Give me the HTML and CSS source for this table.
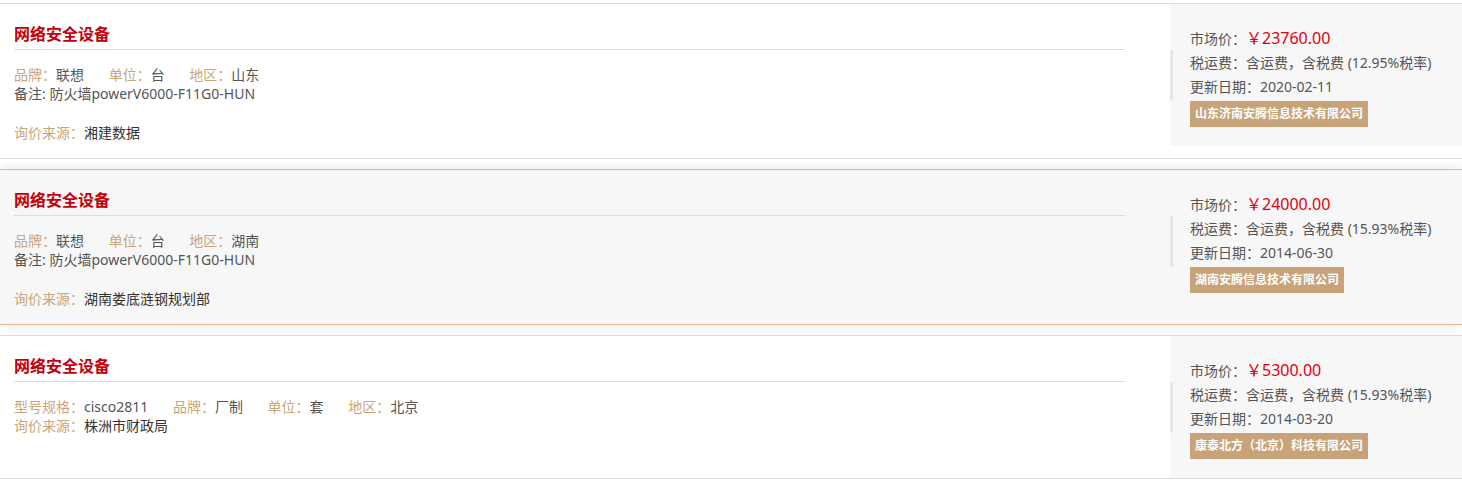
FILE: index.html
```html
<!DOCTYPE html>
<html lang="zh-CN">
<head>
<meta charset="utf-8">
<title>询价列表</title>
<link rel="stylesheet" href="styles.css">
</head>
<body>
<div class="list">
  <div class="card">
    <div class="main">
      <h3 class="title">网络安全设备</h3>
      <div class="row">
        <span class="item"><span class="lbl">品牌：</span>联想</span>
        <span class="item"><span class="lbl">单位：</span>台</span>
        <span class="item"><span class="lbl">地区：</span>山东</span>
      </div>
      <div class="row">备注: 防火墙powerV6000-F11G0-HUN</div>
      <div class="row src"><span class="lbl">询价来源：</span><span class="dark">湘建数据</span></div>
    </div>
    <div class="side">
      <div class="bar"></div>
      <div class="info">
        <div class="line">市场价：<span class="price">￥23760.00</span></div>
        <div class="line">税运费：含运费，含税费 (12.95%税率)</div>
        <div class="line">更新日期：2020-02-11</div>
        <div class="badge">山东济南安腾信息技术有限公司</div>
      </div>
    </div>
  </div>

  <div class="card active">
    <div class="main">
      <h3 class="title">网络安全设备</h3>
      <div class="row">
        <span class="item"><span class="lbl">品牌：</span>联想</span>
        <span class="item"><span class="lbl">单位：</span>台</span>
        <span class="item"><span class="lbl">地区：</span>湖南</span>
      </div>
      <div class="row">备注: 防火墙powerV6000-F11G0-HUN</div>
      <div class="row src"><span class="lbl">询价来源：</span><span class="dark">湖南娄底涟钢规划部</span></div>
    </div>
    <div class="side">
      <div class="bar"></div>
      <div class="info">
        <div class="line">市场价：<span class="price">￥24000.00</span></div>
        <div class="line">税运费：含运费，含税费 (15.93%税率)</div>
        <div class="line">更新日期：2014-06-30</div>
        <div class="badge">湖南安腾信息技术有限公司</div>
      </div>
    </div>
  </div>

  <div class="card">
    <div class="main">
      <h3 class="title">网络安全设备</h3>
      <div class="row">
        <span class="item"><span class="lbl">型号规格：</span>cisco2811</span>
        <span class="item"><span class="lbl">品牌：</span>厂制</span>
        <span class="item"><span class="lbl">单位：</span>套</span>
        <span class="item"><span class="lbl">地区：</span>北京</span>
      </div>
      <div class="row"><span class="lbl">询价来源：</span><span class="dark">株洲市财政局</span></div>
    </div>
    <div class="side">
      <div class="bar"></div>
      <div class="info">
        <div class="line">市场价：<span class="price">￥5300.00</span></div>
        <div class="line">税运费：含运费，含税费 (15.93%税率)</div>
        <div class="line">更新日期：2014-03-20</div>
        <div class="badge">康泰北方（北京）科技有限公司</div>
      </div>
    </div>
  </div>
</div>
</body>
</html>
```

FILE: styles.css
```css
* { box-sizing: border-box; }
html, body {
  margin: 0;
  padding: 0;
  background: #fff;
}
body {
  font-family: "Noto Sans", "Noto Sans CJK SC", sans-serif;
  font-size: 14px;
  color: #555;
}
.list {
  padding-top: 3px;
}
.card {
  display: flex;
  align-items: flex-start;
  border-top: 1px solid #dddddd;
  border-bottom: 1px solid #dddddd;
  background: #fff;
  margin-bottom: 10px;
}
.card.active {
  background: #f7f7f7;
  border-color: #dcbb95;
  box-shadow: 0 0 10px rgba(0, 0, 0, 0.12);
}
.main {
  flex: 1;
  padding: 18px 45px 16px 14px;
}
.title {
  margin: 0;
  font-size: 16px;
  font-weight: bold;
  line-height: 24px;
  color: #c4000a;
  padding-bottom: 3px;
  border-bottom: 1px solid #dddddd;
  margin-bottom: 15px;
}
.row {
  line-height: 19px;
  white-space: nowrap;
}
.row.src {
  margin-top: 20px;
}
.item {
  margin-right: 21px;
}
.lbl {
  color: #c9a57c;
}
.dark {
  color: #333;
}
.side {
  width: 292px;
  height: 142px;
  flex: none;
  background: #f7f7f7;
  display: flex;
  align-items: flex-start;
}
.bar {
  align-self: center;
  width: 3px;
  height: 51px;
  border-radius: 2px;
  background: #e6e6e6;
}
.info {
  margin-left: 17px;
  padding-top: 22px;
}
.line {
  line-height: 24px;
  white-space: nowrap;
}
.price {
  color: #e2000f;
  font-size: 16px;
}
.badge {
  display: inline-block;
  margin-top: 2px;
  height: 26px;
  line-height: 26px;
  padding: 0 5px;
  background: #c8a37a;
  color: #fff;
  font-size: 12px;
  font-weight: bold;
  white-space: nowrap;
}
```
